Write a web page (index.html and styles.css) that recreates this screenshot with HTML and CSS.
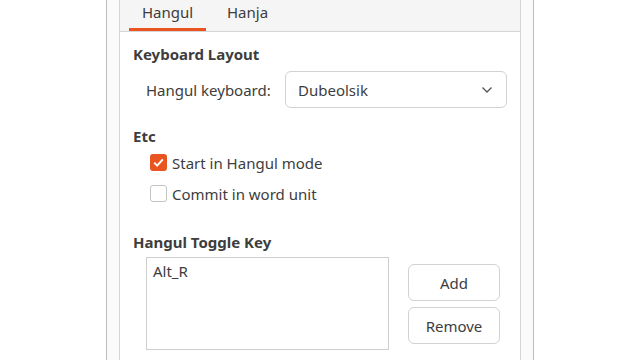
FILE: index.html
```html
<!DOCTYPE html>
<html>
<head>
<meta charset="utf-8">
<link rel="stylesheet" href="styles.css">
</head>
<body>
<div class="window">
  <div class="notebook">
    <div class="tabs">
      <div class="tab active">Hangul</div>
      <div class="tab">Hanja</div>
    </div>
    <div class="page">
      <div class="heading">Keyboard Layout</div>
      <div class="row">
        <span class="label">Hangul keyboard:</span>
        <div class="combo">
          <span>Dubeolsik</span>
          <svg class="chev" width="12" height="8" viewBox="0 0 12 8"><path d="M1.5 1.5 L6 6 L10.5 1.5" fill="none" stroke="#555" stroke-width="1.3"/></svg>
        </div>
      </div>
      <div class="heading etc">Etc</div>
      <div class="check first">
        <span class="box on"><svg width="17" height="17" viewBox="0 0 17 17"><path d="M4.2 8.6 L7.2 11.6 L12.8 5.4" fill="none" stroke="#fff" stroke-width="2"/></svg></span>
        <span>Start in Hangul mode</span>
      </div>
      <div class="check">
        <span class="box"></span>
        <span>Commit in word unit</span>
      </div>
      <div class="heading toggle">Hangul Toggle Key</div>
      <div class="keys">
        <div class="list">Alt_R</div>
        <div class="buttons">
          <div class="btn">Add</div>
          <div class="btn">Remove</div>
        </div>
      </div>
    </div>
  </div>
</div>
</body>
</html>
```
FILE: styles.css
```css
html, body {
  margin: 0;
  padding: 0;
  background: #ffffff;
}
body {
  font-family: "Noto Sans", sans-serif;
  font-size: 15px;
  color: #3d3d3d;
}
.window {
  margin-left: 106px;
  width: 402px;
  height: 360px;
  border-left: 1px solid #bcbcbc;
  border-right: 1px solid #bcbcbc;
  background: #fafafa;
  padding: 0 12px;
  overflow: hidden;
}
.notebook {
  height: 400px;
  border-left: 1px solid #d6d6d6;
  border-right: 1px solid #d6d6d6;
  background: #ffffff;
}
.tabs {
  display: flex;
  height: 31px;
  background: #f5f5f5;
  border-bottom: 1px solid #d6d6d6;
  padding-left: 9px;
}
.tab {
  height: 28px;
  line-height: 25px;
  padding: 0 13px;
  border-bottom: 3px solid transparent;
  margin-right: 8px;
}
.tab.active {
  border-bottom-color: #e95420;
  width: 51px;
}
.page {
  padding: 10px 0 0 13px;
}
.heading {
  font-weight: bold;
  height: 24px;
  line-height: 24px;
}
.row {
  display: flex;
  align-items: center;
  margin-top: 5px;
  padding-left: 13px;
}
.label {
  width: 139px;
}
.combo {
  width: 195px;
  height: 35px;
  border: 1px solid #d2d2d2;
  border-radius: 6px;
  display: flex;
  align-items: center;
  justify-content: space-between;
  padding: 0 13px 0 12px;
}
.chev { margin-top: 1px; }
.etc {
  margin-top: 16px;
}
.check {
  display: flex;
  align-items: center;
  height: 31px;
  padding-left: 17px;
  gap: 5px;
}
.check.first {
  margin-top: -1px;
}
.box {
  width: 15px;
  height: 15px;
  border: 1px solid #c4c4c4;
  border-radius: 3px;
  background: #fff;
  display: flex;
}
.box.on {
  width: 17px;
  height: 17px;
  border: none;
  background: #e95420;
}
.toggle {
  margin-top: 21px;
}
.keys {
  display: flex;
  margin-top: 3px;
  padding-left: 13px;
}
.list {
  width: 235px;
  height: 88px;
  border: 1px solid #cfcfcf;
  padding: 3px 0 0 6px;
}
.buttons {
  margin-left: 19px;
  margin-top: 7px;
  display: flex;
  flex-direction: column;
  gap: 6px;
}
.btn {
  width: 90px;
  height: 35px;
  border: 1px solid #d2d2d2;
  border-radius: 6px;
  display: flex;
  align-items: center;
  justify-content: center;
}
```
